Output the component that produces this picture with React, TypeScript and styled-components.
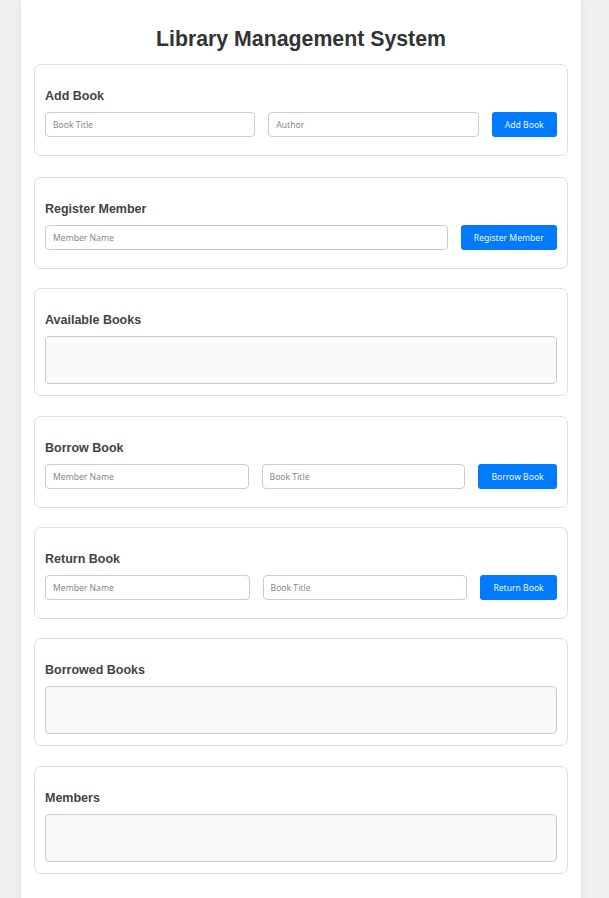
import styled, { createGlobalStyle } from "styled-components";

const GlobalStyle = createGlobalStyle`
  html, body {
    margin: 0;
    padding: 0;
    background: #f0f0f0;
    font-family: "Liberation Sans", Arial, sans-serif;
  }
`;

const App = () => {
  return (
    <>
      <GlobalStyle />
      <Page>
        <Container>
          <Title>Library Management System</Title>

          <Section>
            <Heading>Add Book</Heading>
            <Row>
              <Input placeholder="Book Title" />
              <Input placeholder="Author" />
              <Button>Add Book</Button>
            </Row>
          </Section>

          <Section>
            <Heading>Register Member</Heading>
            <Row>
              <Input placeholder="Member Name" />
              <Button>Register Member</Button>
            </Row>
          </Section>

          <Section>
            <Heading>Available Books</Heading>
            <ListBox />
          </Section>

          <Section>
            <Heading>Borrow Book</Heading>
            <Row>
              <Input placeholder="Member Name" />
              <Input placeholder="Book Title" />
              <Button>Borrow Book</Button>
            </Row>
          </Section>

          <Section>
            <Heading>Return Book</Heading>
            <Row>
              <Input placeholder="Member Name" />
              <Input placeholder="Book Title" />
              <Button>Return Book</Button>
            </Row>
          </Section>

          <Section>
            <Heading>Borrowed Books</Heading>
            <ListBox />
          </Section>

          <Section>
            <Heading>Members</Heading>
            <ListBox />
          </Section>
        </Container>
      </Page>
    </>
  );
};

const Page = styled.div`
  padding: 0 28px 0 21px;
`;

const Container = styled.div`
  background: #ffffff;
  padding: 13px 13px 20px;
  border-radius: 0 0 6px 6px;
  box-shadow: 0 0 7px rgba(0, 0, 0, 0.08);
`;

const Title = styled.h1`
  margin: 14px 0 13px;
  font-size: 21.3px;
  line-height: 24px;
  font-weight: bold;
  text-align: center;
  color: #333;
`;

const Section = styled.div`
  border: 1px solid #ddd;
  border-radius: 7px;
  padding: 10px;
  margin-bottom: 19.6px;

  &:first-of-type {
    margin-bottom: 21.6px;
  }
`;

const Heading = styled.h3`
  margin: 14px 0 8px;
  font-size: 12.5px;
  line-height: 15px;
  font-weight: bold;
  color: #444;
`;

const Row = styled.div`
  display: flex;
  gap: 13px;
  margin-bottom: 7.4px;
`;

const Input = styled.input`
  flex: 1;
  min-width: 0;
  height: 25.2px;
  box-sizing: border-box;
  padding: 0 7px;
  border: 1px solid #ccc;
  border-radius: 4px;
  font-family: "Noto Sans", sans-serif;
  font-size: 8.6px;
  color: #333;
  outline: none;

  &::placeholder {
    color: #888;
  }
`;

const Button = styled.button`
  height: 25.2px;
  padding: 0 13.3px;
  border: none;
  border-radius: 3px;
  background: #007bff;
  color: #f2f6ff;
  font-family: "Noto Sans", sans-serif;
  font-size: 8.6px;
  white-space: nowrap;
  cursor: pointer;
`;

const ListBox = styled.div`
  height: 48px;
  margin-bottom: 1px;
  box-sizing: border-box;
  border: 1px solid #ccc;
  border-radius: 4px;
  background: #f8f9fa;
`;

export default App;
